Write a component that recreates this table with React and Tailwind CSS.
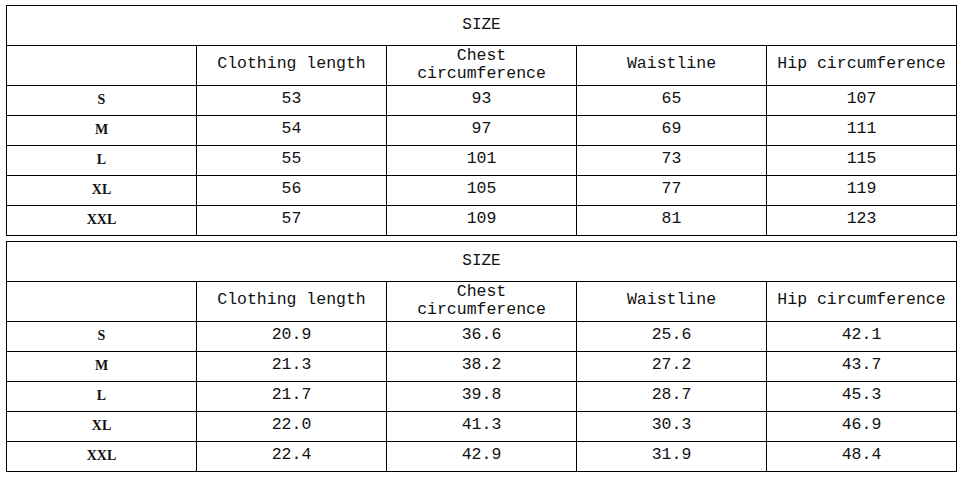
import React from 'react';

const cm = [
    ['S', '53', '93', '65', '107'],
    ['M', '54', '97', '69', '111'],
    ['L', '55', '101', '73', '115'],
    ['XL', '56', '105', '77', '119'],
    ['XXL', '57', '109', '81', '123'],
];

const inch = [
    ['S', '20.9', '36.6', '25.6', '42.1'],
    ['M', '21.3', '38.2', '27.2', '43.7'],
    ['L', '21.7', '39.8', '28.7', '45.3'],
    ['XL', '22.0', '41.3', '30.3', '46.9'],
    ['XXL', '22.4', '42.9', '31.9', '48.4'],
];

function SizeTable({ rows }) {
    const cell = 'border border-black text-center align-middle p-0';
    return (
        <table className="table-fixed border-collapse w-[951px] text-[#111]">
            <colgroup>
                <col className="w-[190px]" />
                <col className="w-[190px]" />
                <col className="w-[190px]" />
                <col className="w-[190px]" />
                <col className="w-[190px]" />
            </colgroup>
            <tbody>
                <tr className="h-[40px]">
                    <td colSpan={5} className={`${cell} text-[16px] pb-[2px]`}>SIZE</td>
                </tr>
                <tr className="h-[40px]">
                    <td className={cell}></td>
                    <td className={`${cell} text-[16.5px] pb-[2px]`}>Clothing length</td>
                    <td className={`${cell} text-[16.5px] leading-[18px] pb-[2px]`}>
                        Chest<br />circumference
                    </td>
                    <td className={`${cell} text-[16.5px] pb-[2px]`}>Waistline</td>
                    <td className={`${cell} text-[16.5px] pb-[2px]`}>Hip circumference</td>
                </tr>
                {rows.map((r) => (
                    <tr key={r[0]} className="h-[30px]">
                        <td className={`${cell} font-['Liberation_Serif',serif] text-[14px] font-bold pb-[2px]`}>{r[0]}</td>
                        {r.slice(1).map((v, i) => (
                            <td key={i} className={`${cell} text-[16.5px] pb-[2px]`}>{v}</td>
                        ))}
                    </tr>
                ))}
            </tbody>
        </table>
    );
}

export default function App() {
    return (
        <div className="w-[962px] h-[477px] bg-white pl-[6px] pt-[5px] flex flex-col gap-[5px] font-['Liberation_Mono',monospace]">
            <SizeTable rows={cm} />
            <SizeTable rows={inch} />
        </div>
    );
}
